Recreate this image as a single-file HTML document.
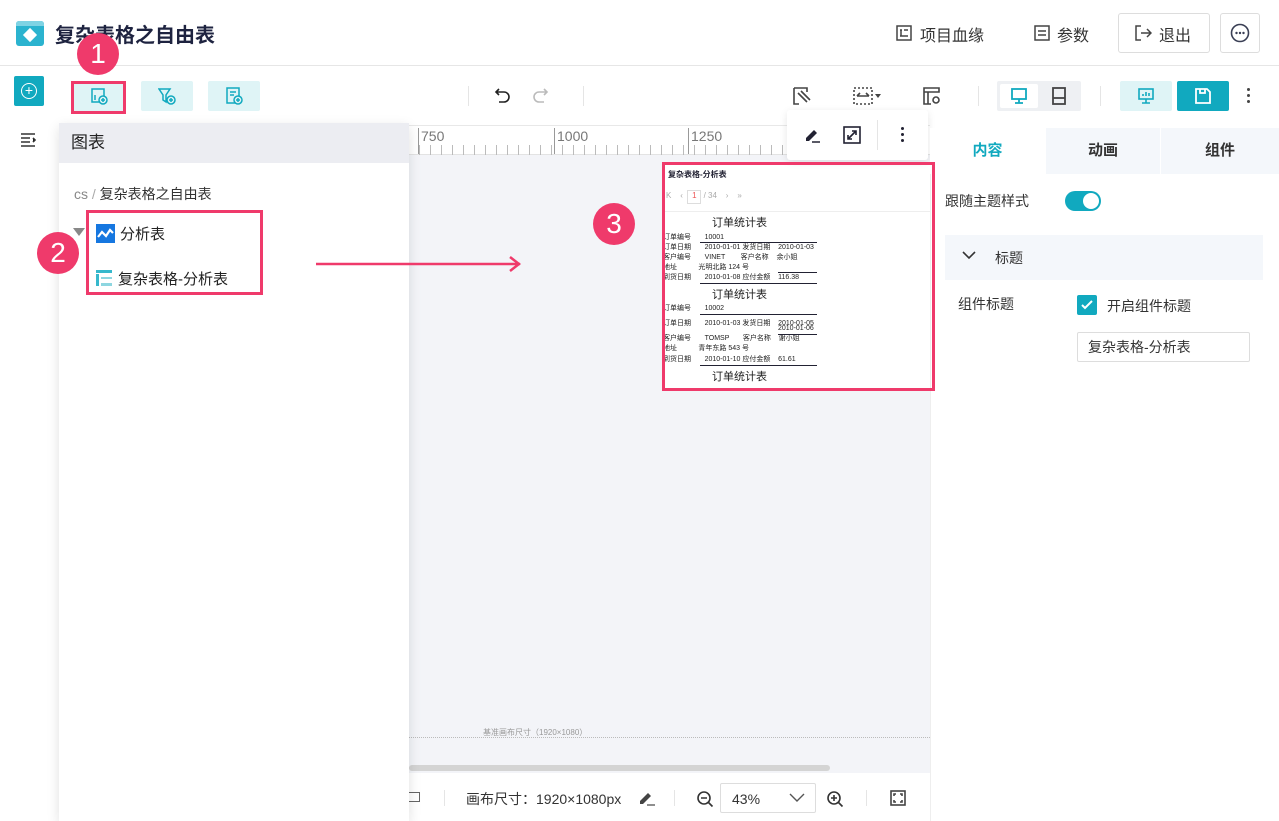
<!DOCTYPE html>
<html><head><meta charset="utf-8">
<style>
*{margin:0;padding:0;box-sizing:border-box}
body{width:1279px;height:821px;overflow:hidden;background:#fff;font-family:"Liberation Sans","Noto Sans CJK SC",sans-serif;color:#333;position:relative}
.a{position:absolute}
.circ{position:absolute;width:42px;height:42px;border-radius:50%;background:#ef3a6b;color:#fff;font-size:28px;text-align:center;line-height:42px}
.tb{position:absolute;top:81px;height:30px;width:52px;background:#dff4f6;border-radius:2px}
.tab{position:absolute;top:128px;height:46px;text-align:center;line-height:46px;font-size:15px;font-weight:bold;background:#f4f7fb;color:#333}
.r{position:absolute;font-size:7px;color:#222;white-space:nowrap;line-height:9px}
.ln{position:absolute;height:1px;background:#223}
</style></head><body>
<!-- header -->
<div class="a" style="left:0;top:65px;width:1279px;height:1px;background:#e6e6e6"></div>
<div class="a" style="left:16px;top:21px;width:28px;height:25px;border-radius:3px;background:#2bb3cf"></div>
<div class="a" style="left:16px;top:21px;width:28px;height:5px;border-radius:3px 3px 0 0;background:#7fd3e4"></div>
<div class="a" style="left:25px;top:30px;width:10px;height:10px;background:#fff;transform:rotate(45deg)"></div>
<div class="a" style="left:55px;top:19px;font-size:20px;font-weight:bold;color:#1e2340">复杂表格之自由表</div>

<svg class="a" style="left:896px;top:25px" width="16" height="16" viewBox="0 0 16 16" fill="none" stroke="#444" stroke-width="1.5"><rect x="1" y="1" width="14" height="14"/><path d="M4 5h2M4 11h2M8 5h4M8 11h4M5 5v6h4"/></svg>
<div class="a" style="left:920px;top:22px;font-size:16px;color:#333">项目血缘</div>
<svg class="a" style="left:1034px;top:25px" width="16" height="16" viewBox="0 0 16 16" fill="none" stroke="#444" stroke-width="1.5"><rect x="1" y="1" width="14" height="14"/><path d="M4 6h8M4 10h8"/></svg>
<div class="a" style="left:1057px;top:22px;font-size:16px;color:#333">参数</div>
<div class="a" style="left:1118px;top:13px;width:92px;height:40px;border:1px solid #ddd;border-radius:3px"></div>
<svg class="a" style="left:1135px;top:25px" width="17" height="16" viewBox="0 0 17 16" fill="none" stroke="#444" stroke-width="1.5"><path d="M6 1H1v14h5M6 8h10M12 4l4 4-4 4"/></svg>
<div class="a" style="left:1159px;top:22px;font-size:16px;color:#333">退出</div>
<div class="a" style="left:1220px;top:13px;width:40px;height:40px;border:1px solid #ddd;border-radius:3px"></div>
<svg class="a" style="left:1230px;top:23px" width="20" height="20" viewBox="0 0 20 20"><circle cx="10" cy="10" r="8.5" fill="none" stroke="#3a3f55" stroke-width="1.6"/><circle cx="6.5" cy="10" r="1.2" fill="#3a3f55"/><circle cx="10" cy="10" r="1.2" fill="#3a3f55"/><circle cx="13.5" cy="10" r="1.2" fill="#3a3f55"/></svg>

<!-- left sidebar -->
<div class="a" style="left:14px;top:76px;width:30px;height:30px;background:#11a9bf;border-radius:2px"></div>
<div class="a" style="left:21px;top:83px;width:16px;height:16px;border:1.6px solid #fff;border-radius:50%;color:#fff;text-align:center;font-size:14px;line-height:12px">+</div>
<svg class="a" style="left:21px;top:133px" width="16" height="14" viewBox="0 0 16 14" stroke="#333" stroke-width="1.6"><path d="M0 1h14M0 5h9M0 9h9M0 13h14M12 5l2 2-2 2"/></svg>

<!-- toolbar -->
<div class="tb" style="left:73px"></div>
<div class="a" style="left:71px;top:81px;width:55px;height:33px;border:3px solid #ef3a6b"></div>
<svg class="a" style="left:90px;top:87px" width="18" height="18" viewBox="0 0 18 18" fill="none" stroke="#11a9bf" stroke-width="1.5"><rect x="2" y="2" width="12" height="13"/><circle cx="13" cy="13" r="4" fill="#dff4f6"/><path d="M13 11v4M11 13h4M5 8v5"/></svg>
<div class="tb" style="left:141px"></div>
<svg class="a" style="left:158px;top:87px" width="18" height="18" viewBox="0 0 18 18" fill="none" stroke="#11a9bf" stroke-width="1.5"><path d="M1 2h11L8 8v7L5 13V8z"/><circle cx="13" cy="13" r="4" fill="#dff4f6"/><path d="M13 11v4M11 13h4"/></svg>
<div class="tb" style="left:208px"></div>
<svg class="a" style="left:225px;top:87px" width="18" height="18" viewBox="0 0 18 18" fill="none" stroke="#11a9bf" stroke-width="1.5"><rect x="2" y="1" width="12" height="15"/><path d="M5 5h6M5 8h4"/><circle cx="13" cy="13" r="4" fill="#dff4f6"/><path d="M13 11v4M11 13h4"/></svg>
<div class="a" style="left:468px;top:86px;width:1px;height:20px;background:#e5e5e5"></div>
<div class="a" style="left:583px;top:86px;width:1px;height:20px;background:#e5e5e5"></div>
<svg class="a" style="left:494px;top:87px" width="18" height="18" viewBox="0 0 18 18" fill="none" stroke="#222" stroke-width="1.6"><path d="M5 2L2 5l3 3M2 5h8a5 5 0 010 10H5"/></svg>
<svg class="a" style="left:531px;top:87px" width="18" height="18" viewBox="0 0 18 18" fill="none" stroke="#bbb" stroke-width="1.6"><path d="M13 2l3 3-3 3M16 5H8a5 5 0 000 10h5"/></svg>
<svg class="a" style="left:793px;top:87px" width="18" height="18" viewBox="0 0 18 18" fill="none" stroke="#444" stroke-width="1.6"><path d="M1 1h13v4M1 1v16h5M5 6l9 9M8 4l9 9"/></svg>
<svg class="a" style="left:853px;top:87px" width="30" height="18" viewBox="0 0 30 18" fill="none" stroke="#444" stroke-width="1.6"><path d="M1 1h18v16H1z" stroke-dasharray="2 2"/><path d="M4 9h12M4 9l3-3M16 9l-3-3"/><path d="M22 7h6l-3 4z" fill="#444" stroke="none"/></svg>
<svg class="a" style="left:923px;top:87px" width="18" height="18" viewBox="0 0 18 18" fill="none" stroke="#444" stroke-width="1.6"><path d="M1 1h15v4H1zM1 5v12h7M5 5v12"/><circle cx="13" cy="13" r="3"/></svg>
<div class="a" style="left:978px;top:86px;width:1px;height:20px;background:#e5e5e5"></div>
<div class="a" style="left:997px;top:81px;width:84px;height:30px;background:#eef0f3;border-radius:2px"></div>
<div class="a" style="left:1000px;top:84px;width:38px;height:24px;background:#fff;border-radius:2px"></div>
<svg class="a" style="left:1010px;top:87px" width="18" height="18" viewBox="0 0 18 18" fill="none" stroke="#11a9bf" stroke-width="1.8"><rect x="2" y="2" width="14" height="10"/><path d="M9 12v4M5 16h8"/></svg>
<svg class="a" style="left:1051px;top:87px" width="16" height="18" viewBox="0 0 16 18" fill="none" stroke="#444" stroke-width="1.8"><rect x="2" y="1" width="12" height="16"/><path d="M2 11h12"/></svg>
<div class="a" style="left:1100px;top:86px;width:1px;height:20px;background:#e5e5e5"></div>
<div class="a" style="left:1120px;top:81px;width:52px;height:30px;background:#dff4f6;border-radius:2px"></div>
<svg class="a" style="left:1137px;top:87px" width="18" height="18" viewBox="0 0 18 18" fill="none" stroke="#11a9bf" stroke-width="1.6"><rect x="2" y="2" width="14" height="10"/><path d="M9 12v4M5 16h8M6 9V7M9 9V5M12 9V6"/></svg>
<div class="a" style="left:1177px;top:81px;width:52px;height:30px;background:#11a9bf;border-radius:2px"></div>
<svg class="a" style="left:1194px;top:87px" width="18" height="18" viewBox="0 0 18 18" fill="none" stroke="#fff" stroke-width="1.8"><path d="M2 2h11l3 3v11H2z"/><path d="M6 2v4h5V2"/></svg>
<div class="a" style="left:1247px;top:88px;width:3px;height:3px;background:#444;border-radius:50%;box-shadow:0 6px 0 #444,0 12px 0 #444"></div>

<!-- canvas area -->
<div class="a" style="left:409px;top:125px;width:521px;height:648px;background:#f3f4f8"></div>
<div class="a" style="left:409px;top:125px;width:521px;height:30px;background:#fff;border-bottom:1px solid #e3e3e3;border-top:1px solid #e8e8e8"></div>
<div class="a" style="left:409px;top:137px;width:521px;height:18px;background:repeating-linear-gradient(90deg,transparent 0 10px,#bbb 10px 11px) ;clip-path:inset(8px 0 0 0)"></div>
<div class="a" style="left:418px;top:128px;font-size:14px;color:#777;border-left:1px solid #999;padding-left:2px;height:26px">750</div>
<div class="a" style="left:554px;top:128px;font-size:14px;color:#777;border-left:1px solid #999;padding-left:2px;height:26px">1000</div>
<div class="a" style="left:688px;top:128px;font-size:14px;color:#777;border-left:1px solid #999;padding-left:2px;height:26px">1250</div>
<div class="a" style="left:409px;top:737px;width:521px;border-top:1px dotted #bbb"></div>
<div class="a" style="left:483px;top:727px;font-size:8px;color:#999">基准画布尺寸（1920×1080）</div>
<div class="a" style="left:409px;top:765px;width:421px;height:6px;background:#d4d4d4;border-radius:3px"></div>

<!-- selected widget -->
<div class="a" style="left:662px;top:162px;width:273px;height:229px;background:#fff"></div>
<div class="a" style="left:668px;top:169px;font-size:8px;font-weight:bold;color:#223">复杂表格-分析表</div>
<div class="a" style="left:666px;top:190px;font-size:8px;color:#aaa;white-space:nowrap">K &nbsp;&nbsp; ‹ &nbsp;<span style="display:inline-block;width:14px;height:14px;border:1px solid #ddd;text-align:center;color:#e55">1</span> / 34 &nbsp;&nbsp; › &nbsp;&nbsp; »</div>
<div class="a" style="left:665px;top:211px;width:266px;height:1px;background:#eee"></div>
<div class="a" style="left:712px;top:214px;font-size:11px;color:#222">订单统计表</div>
<div class="r" style="left:663px;top:233px">订单编号 &nbsp;&nbsp;&nbsp;&nbsp;&nbsp; 10001</div>
<div class="r" style="left:663px;top:243px">订单日期 &nbsp;&nbsp;&nbsp;&nbsp;&nbsp; 2010-01-01 发货日期 &nbsp;&nbsp; 2010-01-03</div>
<div class="r" style="left:663px;top:253px">客户编号 &nbsp;&nbsp;&nbsp;&nbsp;&nbsp; VINET &nbsp;&nbsp;&nbsp;&nbsp;&nbsp;&nbsp; 客户名称 &nbsp;&nbsp; 余小姐</div>
<div class="r" style="left:663px;top:263px">地址 &nbsp;&nbsp;&nbsp;&nbsp;&nbsp;&nbsp;&nbsp;&nbsp;&nbsp; 光明北路 124 号</div>
<div class="r" style="left:663px;top:273px">到货日期 &nbsp;&nbsp;&nbsp;&nbsp;&nbsp; 2010-01-08 应付金额 &nbsp;&nbsp; 116.38</div>
<div class="ln" style="left:700px;top:242px;width:117px"></div>
<div class="ln" style="left:700px;top:283px;width:117px"></div>
<div class="ln" style="left:778px;top:272px;width:39px"></div>
<div class="a" style="left:712px;top:286px;font-size:11px;color:#222">订单统计表</div>
<div class="r" style="left:663px;top:304px">订单编号 &nbsp;&nbsp;&nbsp;&nbsp;&nbsp; 10002</div>
<div class="r" style="left:663px;top:319px">订单日期 &nbsp;&nbsp;&nbsp;&nbsp;&nbsp; 2010-01-03 发货日期 &nbsp;&nbsp; 2010-01-05</div>
<div class="r" style="left:778px;top:324px">2010-01-06</div>
<div class="r" style="left:663px;top:334px">客户编号 &nbsp;&nbsp;&nbsp;&nbsp;&nbsp; TOMSP &nbsp;&nbsp;&nbsp;&nbsp;&nbsp; 客户名称 &nbsp;&nbsp; 谢小姐</div>
<div class="r" style="left:663px;top:344px">地址 &nbsp;&nbsp;&nbsp;&nbsp;&nbsp;&nbsp;&nbsp;&nbsp;&nbsp; 青年东路 543 号</div>
<div class="r" style="left:663px;top:355px">到货日期 &nbsp;&nbsp;&nbsp;&nbsp;&nbsp; 2010-01-10 应付金额 &nbsp;&nbsp; 61.61</div>
<div class="ln" style="left:700px;top:314px;width:117px"></div>
<div class="ln" style="left:700px;top:365px;width:117px"></div>
<div class="ln" style="left:778px;top:334px;width:39px"></div>
<div class="a" style="left:712px;top:368px;font-size:11px;color:#222">订单统计表</div>

<!-- floating toolbar -->
<div class="a" style="left:787px;top:110px;width:141px;height:50px;background:#fff;box-shadow:0 2px 8px rgba(0,0,0,.1);border-radius:3px"></div>
<svg class="a" style="left:803px;top:126px" width="18" height="18" viewBox="0 0 18 18"><path d="M3 12L11 4l3 3-8 8H3z" fill="#223"/><path d="M9 16h8" stroke="#223" stroke-width="1.5"/></svg>
<svg class="a" style="left:843px;top:126px" width="18" height="18" viewBox="0 0 18 18" fill="none" stroke="#223" stroke-width="1.6"><rect x="1" y="1" width="16" height="16"/><path d="M5 13l8-8M9 5h4v4M5 9v4h4"/></svg>
<div class="a" style="left:877px;top:120px;width:1px;height:30px;background:#e5e5e5"></div>
<div class="a" style="left:901px;top:127px;width:3px;height:3px;background:#223;border-radius:50%;box-shadow:0 6px 0 #223,0 12px 0 #223"></div>

<!-- right panel -->
<div class="a" style="left:930px;top:128px;width:349px;height:693px;background:#fff;border-left:1px solid #eee"></div>
<div class="tab" style="left:930px;width:115px;background:#fff;color:#11a9bf">内容</div>
<div class="tab" style="left:1046px;width:114px">动画</div>
<div class="tab" style="left:1161px;width:118px">组件</div>
<div class="a" style="left:945px;top:191px;font-size:14px;color:#333">跟随主题样式</div>
<div class="a" style="left:1065px;top:191px;width:36px;height:20px;background:#11a9bf;border-radius:10px"></div>
<div class="a" style="left:1083px;top:193px;width:16px;height:16px;background:#fff;border-radius:50%"></div>
<div class="a" style="left:945px;top:235px;width:318px;height:45px;background:#f4f7fb"></div>
<svg class="a" style="left:962px;top:250px" width="14" height="10" viewBox="0 0 14 10" fill="none" stroke="#333" stroke-width="1.6"><path d="M1 2l6 6 6-6"/></svg>
<div class="a" style="left:995px;top:248px;font-size:14px;color:#333">标题</div>
<div class="a" style="left:958px;top:294px;font-size:14px;color:#333">组件标题</div>
<div class="a" style="left:1077px;top:295px;width:20px;height:20px;background:#11a9bf;border-radius:2px"></div>
<svg class="a" style="left:1080px;top:298px" width="14" height="14" viewBox="0 0 14 14" fill="none" stroke="#fff" stroke-width="2"><path d="M2 7l3 3 7-7"/></svg>
<div class="a" style="left:1107px;top:296px;font-size:14px;color:#333">开启组件标题</div>
<div class="a" style="left:1077px;top:332px;width:173px;height:30px;border:1px solid #ddd;border-radius:2px;font-size:14px;line-height:28px;padding-left:10px;color:#333">复杂表格-分析表</div>

<!-- widget red border on top -->
<div class="a" style="left:662px;top:162px;width:273px;height:229px;border:3px solid #ef3a6b"></div>

<!-- bottom bar -->
<div class="a" style="left:409px;top:773px;width:521px;height:48px;background:#fff"></div>
<div class="a" style="left:408px;top:792px;width:12px;height:10px;border:1px solid #666"></div>
<div class="a" style="left:444px;top:790px;width:1px;height:16px;background:#e5e5e5"></div>
<div class="a" style="left:466px;top:789px;font-size:14px;color:#333">画布尺寸：1920×1080px</div>
<svg class="a" style="left:638px;top:790px" width="18" height="16" viewBox="0 0 18 16"><path d="M2 11L10 3l3 3-8 8H2z" fill="#444"/><path d="M9 15h8" stroke="#444" stroke-width="1.2"/></svg>
<div class="a" style="left:674px;top:790px;width:1px;height:16px;background:#e5e5e5"></div>
<svg class="a" style="left:696px;top:790px" width="18" height="18" viewBox="0 0 18 18" fill="none" stroke="#333" stroke-width="1.6"><circle cx="8" cy="8" r="6"/><path d="M5 8h6M12.5 12.5l4 4"/></svg>
<div class="a" style="left:720px;top:783px;width:96px;height:30px;border:1px solid #ddd;border-radius:2px;font-size:14px;line-height:30px;padding-left:11px;color:#333">43%</div>
<svg class="a" style="left:789px;top:793px" width="16" height="10" viewBox="0 0 16 10" fill="none" stroke="#555" stroke-width="1.4"><path d="M1 1l7 7 7-7"/></svg>
<svg class="a" style="left:826px;top:790px" width="18" height="18" viewBox="0 0 18 18" fill="none" stroke="#333" stroke-width="1.6"><circle cx="8" cy="8" r="6"/><path d="M5 8h6M8 5v6M12.5 12.5l4 4"/></svg>
<div class="a" style="left:866px;top:790px;width:1px;height:16px;background:#e5e5e5"></div>
<svg class="a" style="left:890px;top:790px" width="16" height="16" viewBox="0 0 16 16" fill="none" stroke="#444" stroke-width="1.6"><rect x="1" y="1" width="14" height="14"/><path d="M4 6V4h2M10 4h2v2M12 10v2h-2M6 12H4v-2"/></svg>

<!-- dropdown panel -->
<div class="a" style="left:59px;top:123px;width:350px;height:698px;background:#fff;box-shadow:0 4px 12px rgba(0,0,0,.12)"></div>
<div class="a" style="left:59px;top:123px;width:350px;height:40px;background:#ecedf2;font-size:17px;line-height:40px;padding-left:12px;color:#222">图表</div>
<div class="a" style="left:74px;top:184px;font-size:14px;color:#333"><span style="color:#888">cs</span> <span style="color:#aaa">/</span> 复杂表格之自由表</div>
<div class="a" style="left:73px;top:228px;width:0;height:0;border-left:6px solid transparent;border-right:6px solid transparent;border-top:8px solid #888"></div>
<div class="a" style="left:96px;top:224px;width:19px;height:19px;background:#1677e0"></div>
<svg class="a" style="left:96px;top:224px" width="19" height="19" viewBox="0 0 19 19" fill="none" stroke="#fff" stroke-width="2.2"><path d="M2 13l4-5 4 4 4-6 3 3"/></svg>
<div class="a" style="left:120px;top:223px;font-size:15px;color:#222">分析表</div>
<svg class="a" style="left:96px;top:270px" width="16" height="16" viewBox="0 0 16 16"><rect x="0" y="0" width="16" height="3" fill="#36b8cc"/><rect x="0" y="4" width="3" height="12" fill="#36b8cc"/><rect x="5" y="7" width="11" height="2" fill="#8dd6e0"/><rect x="5" y="13" width="11" height="3" fill="#8dd6e0"/></svg>
<div class="a" style="left:118px;top:268px;font-size:15px;color:#222">复杂表格-分析表</div>
<div class="a" style="left:86px;top:210px;width:177px;height:85px;border:3px solid #ef3a6b"></div>

<!-- arrow -->
<svg class="a" style="left:314px;top:255px" width="212" height="18" viewBox="0 0 212 18" fill="none" stroke="#ef3a6b" stroke-width="2.5"><path d="M2 9h204M196 2l9 7-9 7"/></svg>

<!-- markers -->
<div class="circ" style="left:77px;top:33px">1</div>
<div class="circ" style="left:37px;top:232px">2</div>
<div class="circ" style="left:593px;top:203px">3</div>
</body></html>
